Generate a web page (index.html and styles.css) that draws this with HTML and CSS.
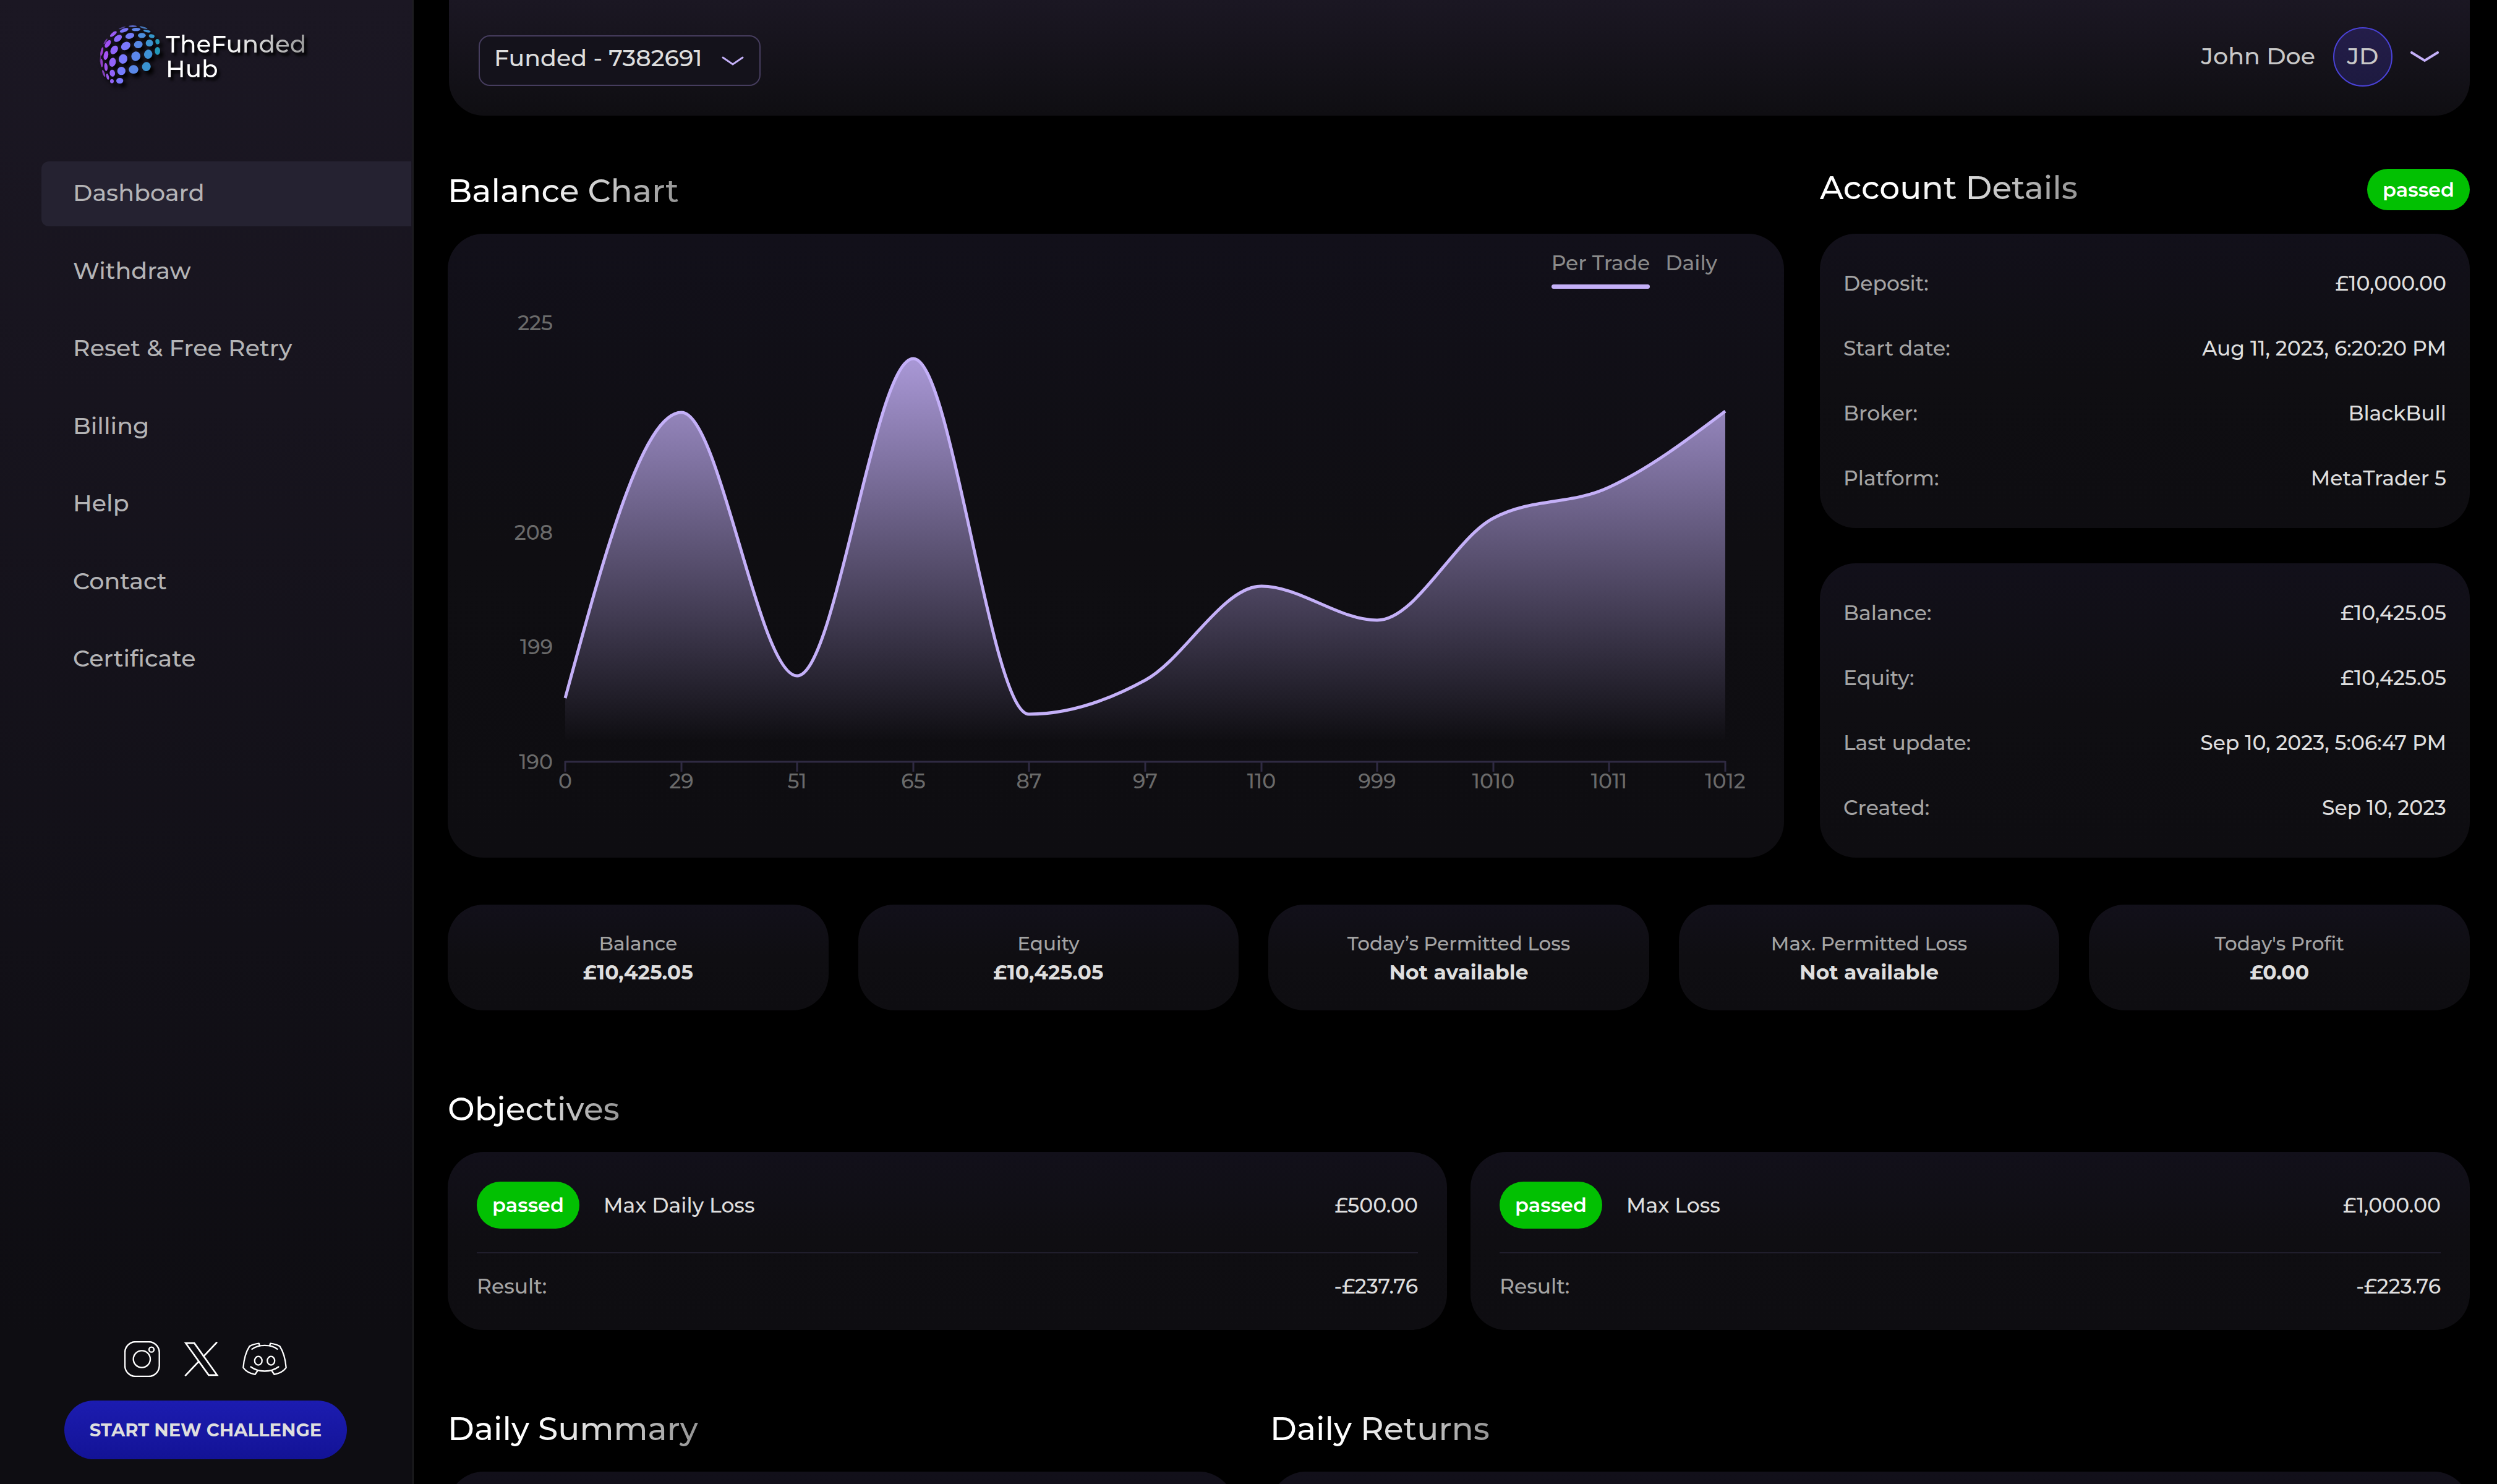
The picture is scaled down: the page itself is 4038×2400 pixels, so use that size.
FILE: index.html
```
<!DOCTYPE html>
<html lang="en">
<head>
<meta charset="utf-8">
<meta name="viewport" content="width=device-width, initial-scale=1">
<title>TheFunded Hub - Dashboard</title>
<link rel="stylesheet" href="styles.css">
</head>
<body>
<div class="app">
  <aside class="sidebar">
    <a class="logo" href="#">
      <svg class="logo-mark" viewBox="30 36 312 312" aria-hidden="true">
        <g fill="#7a44b8">
          <ellipse cx="143" cy="60" rx="17" ry="3" transform="rotate(-20 143 60)" fill="#4f4496"/>
          <ellipse cx="62" cy="126" rx="16" ry="4" transform="rotate(-58 62 126)" fill="#6a389c"/>
          <ellipse cx="37" cy="207" rx="2" ry="18" transform="rotate(6 37 207)" fill="#5c2c80"/>
        </g>
        <ellipse cx="194" cy="52" rx="20" ry="4" fill="#5f70d8"/>
        <ellipse cx="246" cy="59" rx="20" ry="4" transform="rotate(15 246 59)" fill="#4678bc"/>
        <ellipse cx="152" cy="72" rx="22" ry="9" transform="rotate(-20 152 72)" fill="#7b74fb"/>
        <ellipse cx="210" cy="68" rx="21" ry="8" transform="rotate(-2 210 68)" fill="#5f86ea"/>
        <ellipse cx="263" cy="76" rx="18" ry="6" transform="rotate(12 263 76)" fill="#4090d4"/>
        <ellipse cx="100" cy="90" rx="20" ry="8" transform="rotate(-38 100 90)" fill="#9a5cf5"/>
        <ellipse cx="122" cy="111" rx="22" ry="14" transform="rotate(-38 122 111)" fill="#8a68fa"/>
        <ellipse cx="180" cy="99" rx="22" ry="14" transform="rotate(-15 180 99)" fill="#737cf8"/>
        <ellipse cx="238" cy="97" rx="19" ry="12" fill="#4c8ede"/>
        <ellipse cx="286" cy="100" rx="14" ry="9" transform="rotate(10 286 100)" fill="#3595c8"/>
        <ellipse cx="73" cy="138" rx="21" ry="11" transform="rotate(-55 73 138)" fill="#a050f5"/>
        <ellipse cx="104" cy="167" rx="23" ry="16" transform="rotate(-55 104 167)" fill="#8f64fa"/>
        <ellipse cx="160" cy="148" rx="24" ry="19" transform="rotate(-35 160 148)" fill="#7a78fb"/>
        <ellipse cx="221" cy="141" rx="21" ry="18" transform="rotate(-10 221 141)" fill="#5688e6"/>
        <ellipse cx="275" cy="134" rx="18" ry="17" fill="#3d94d0"/>
        <ellipse cx="314" cy="127" rx="10" ry="13" transform="rotate(-10 314 127)" fill="#2498b8"/>
        <ellipse cx="44" cy="175" rx="6" ry="22" transform="rotate(12 44 175)" fill="#9a3fd0"/>
        <ellipse cx="64" cy="194" rx="11" ry="22" transform="rotate(12 64 194)" fill="#a654f5"/>
        <ellipse cx="96" cy="227" rx="16" ry="22" transform="rotate(12 96 227)" fill="#9263f8"/>
        <ellipse cx="147" cy="211" rx="21" ry="23" transform="rotate(10 147 211)" fill="#7a7afc"/>
        <ellipse cx="209" cy="198" rx="22" ry="23" transform="rotate(20 209 198)" fill="#5c88ee"/>
        <ellipse cx="269" cy="188" rx="20" ry="22" transform="rotate(15 269 188)" fill="#3e92d6"/>
        <ellipse cx="314" cy="172" rx="13" ry="19" fill="#2298b8"/>
        <ellipse cx="43" cy="230" rx="6" ry="21" transform="rotate(-5 43 230)" fill="#9240c8"/>
        <ellipse cx="64" cy="250" rx="8" ry="20" transform="rotate(-5 64 250)" fill="#a052ee"/>
        <ellipse cx="95" cy="280" rx="13" ry="17" transform="rotate(-10 95 280)" fill="#9263f8"/>
        <ellipse cx="139" cy="269" rx="20" ry="20" fill="#757cfc"/>
        <ellipse cx="198" cy="262" rx="23" ry="21" fill="#5a88e8"/>
        <ellipse cx="260" cy="248" rx="21" ry="22" transform="rotate(15 260 248)" fill="#3a93d2"/>
        <ellipse cx="53" cy="281" rx="5" ry="18" transform="rotate(-20 53 281)" fill="#8440bc"/>
        <ellipse cx="72" cy="297" rx="6" ry="15" transform="rotate(-15 72 297)" fill="#9a58ec"/>
        <ellipse cx="93" cy="319" rx="9" ry="10" fill="#9264f4"/>
        <ellipse cx="131" cy="317" rx="17" ry="14" fill="#7a78fb"/>
      </svg>
      <span class="logo-shadow"><span class="logo-text">TheFunded<br>Hub</span></span>
    </a>

    <nav class="nav" aria-label="Main">
      <a class="nav-link nav-link-active" href="#" aria-current="page">Dashboard</a>
      <a class="nav-link" href="#">Withdraw</a>
      <a class="nav-link" href="#">Reset &amp; Free Retry</a>
      <a class="nav-link" href="#">Billing</a>
      <a class="nav-link" href="#">Help</a>
      <a class="nav-link" href="#">Contact</a>
      <a class="nav-link" href="#">Certificate</a>
    </nav>

    <div class="sidebar-foot">
      <div class="social">
        <a href="#" aria-label="Instagram">
          <svg width="58" height="58" viewBox="63 57 174 174" fill="none" stroke="#fff" stroke-width="7">
            <rect x="66" y="60" width="167" height="168" rx="52"/>
            <circle cx="148" cy="144" r="41"/>
            <circle cx="195" cy="98" r="12"/>
          </svg>
        </a>
        <a href="#" aria-label="X">
          <svg width="57" height="56" viewBox="348 62 172 168" fill="none" stroke="#fff" stroke-width="8">
            <path d="M358 68H400L511 224H470Z"/>
            <path d="M511 63L443 135M424 155L355 228"/>
          </svg>
        </a>
        <a href="#" aria-label="Discord">
          <svg width="72" height="54" viewBox="633 65 218 162" fill="none" stroke="#fff" stroke-width="7" stroke-linecap="round" stroke-linejoin="round">
            <path d="M717 79L714 69C695 71 680 76 668 83C652 108 640 150 637 188C650 206 672 217 695 221L706 205"/>
            <path d="M767 79L770 69C789 71 804 76 816 83C832 108 844 150 847 188C834 206 812 217 789 221L778 205"/>
            <path d="M680 97C698 84 720 79 742 79S788 84 804 97M674 184C712 212 772 212 810 184"/>
            <ellipse cx="711" cy="154" rx="18" ry="21"/>
            <ellipse cx="773" cy="154" rx="18" ry="21"/>
          </svg>
        </a>
      </div>
      <button class="cta" type="button">START NEW CHALLENGE</button>
    </div>
  </aside>

  <main class="main">
    <header class="topbar">
      <div class="account-select">
        <select class="select" aria-label="Account">
          <option>Funded - 7382691</option>
        </select>
        <svg class="select-arrow" width="36" height="16" viewBox="0 0 36 16" fill="none" stroke="#c4b0f8" stroke-width="3" stroke-linecap="round" aria-hidden="true"><path d="M2 2L18 13L34 2"/></svg>
      </div>
      <button class="user" type="button" aria-haspopup="menu">
        <span class="user-name">John Doe</span>
        <span class="avatar">JD</span>
        <svg width="46" height="18" viewBox="0 0 46 18" fill="none" stroke="#c4b0f8" stroke-width="4" stroke-linecap="round" aria-hidden="true"><path d="M2 2L23 15L44 2"/></svg>
      </button>
    </header>

    <div class="overview">
      <section class="column">
        <h2 class="title">Balance Chart</h2>
        <div class="card chart-card">
          <div class="tabs" role="tablist">
            <button class="tab tab-active" type="button" role="tab" aria-selected="true">Per Trade</button>
            <button class="tab" type="button" role="tab" aria-selected="false">Daily</button>
          </div>
          <svg class="chart" viewBox="0 0 2161 920" role="img" aria-label="Balance per trade">
            <defs>
              <linearGradient id="area" x1="0" y1="0" x2="0" y2="1">
                <stop offset="0" stop-color="#c4b0f8" stop-opacity="0.85"/>
                <stop offset="0.95" stop-color="#c4b0f8" stop-opacity="0"/>
              </linearGradient>
            </defs>
            <path fill="url(#area)" d="M190 662C253 431 315 200 378 200C440 200 503 626 565 626C628 626 690 113 753 113C815 113 878 688 940 688C1003 688 1066 667 1128 633C1191 599 1253 481 1316 481C1378 481 1441 536 1503 536C1566 536 1628 404 1691 371C1753 338 1816 350 1878 321C1941 292 2004 245 2066 198V765H190Z"/>
            <path fill="none" stroke="#c4b0f8" stroke-width="5" d="M190 662C253 431 315 200 378 200C440 200 503 626 565 626C628 626 690 113 753 113C815 113 878 688 940 688C1003 688 1066 667 1128 633C1191 599 1253 481 1316 481C1378 481 1441 536 1503 536C1566 536 1628 404 1691 371C1753 338 1816 350 1878 321C1941 292 2004 245 2066 198"/>
            <path class="axis" d="M190 765H2066M190 764V781M378 764V781M565 764V781M753 764V781M940 764V781M1128 764V781M1316 764V781M1503 764V781M1691 764V781M1878 764V781M2066 764V781"/>
            <g class="tick tick-y">
              <text x="170" y="67">225</text>
              <text x="170" y="406">208</text>
              <text x="170" y="591">199</text>
              <text x="170" y="777">190</text>
            </g>
            <g class="tick tick-x">
              <text x="190" y="808">0</text>
              <text x="378" y="808">29</text>
              <text x="565" y="808">51</text>
              <text x="753" y="808">65</text>
              <text x="940" y="808">87</text>
              <text x="1128" y="808">97</text>
              <text x="1316" y="808">110</text>
              <text x="1503" y="808">999</text>
              <text x="1691" y="808">1010</text>
              <text x="1878" y="808">1011</text>
              <text x="2066" y="808">1012</text>
            </g>
          </svg>
        </div>
      </section>

      <section class="column">
        <div class="title-row">
          <h2 class="title">Account Details</h2>
          <span class="badge">passed</span>
        </div>
        <div class="details">
          <dl class="card detail-list">
            <div class="detail"><dt>Deposit:</dt><dd>£10,000.00</dd></div>
            <div class="detail"><dt>Start date:</dt><dd>Aug 11, 2023, 6:20:20 PM</dd></div>
            <div class="detail"><dt>Broker:</dt><dd>BlackBull</dd></div>
            <div class="detail"><dt>Platform:</dt><dd>MetaTrader 5</dd></div>
          </dl>
          <dl class="card detail-list">
            <div class="detail"><dt>Balance:</dt><dd>£10,425.05</dd></div>
            <div class="detail"><dt>Equity:</dt><dd>£10,425.05</dd></div>
            <div class="detail"><dt>Last update:</dt><dd>Sep 10, 2023, 5:06:47 PM</dd></div>
            <div class="detail"><dt>Created:</dt><dd>Sep 10, 2023</dd></div>
          </dl>
        </div>
      </section>
    </div>

    <dl class="stats">
      <div class="card stat"><dt>Balance</dt><dd>£10,425.05</dd></div>
      <div class="card stat"><dt>Equity</dt><dd>£10,425.05</dd></div>
      <div class="card stat"><dt>Today’s Permitted Loss</dt><dd>Not available</dd></div>
      <div class="card stat"><dt>Max. Permitted Loss</dt><dd>Not available</dd></div>
      <div class="card stat"><dt>Today's Profit</dt><dd>£0.00</dd></div>
    </dl>

    <section class="section">
      <h2 class="title">Objectives</h2>
      <div class="objectives">
        <article class="card objective">
          <div class="objective-head">
            <span class="badge badge-tall">passed</span>
            <span>Max Daily Loss</span>
            <span class="amount">£500.00</span>
          </div>
          <div class="objective-result"><span class="muted">Result:</span><span>-£237.76</span></div>
        </article>
        <article class="card objective">
          <div class="objective-head">
            <span class="badge badge-tall">passed</span>
            <span>Max Loss</span>
            <span class="amount">£1,000.00</span>
          </div>
          <div class="objective-result"><span class="muted">Result:</span><span>-£223.76</span></div>
        </article>
      </div>
    </section>

    <div class="section daily">
      <section>
        <h2 class="title">Daily Summary</h2>
        <div class="card daily-card"></div>
      </section>
      <section>
        <h2 class="title">Daily Returns</h2>
        <div class="card daily-card"></div>
      </section>
    </div>
  </main>
</div>
</body>
</html>
```
FILE: styles.css
```
* {
  box-sizing: border-box;
}

body {
  margin: 0;
  background: #000;
  color: #dedede;
  font-family: Montserrat, Inter, sans-serif;
  font-size: 33px;
  font-weight: 500;
  overflow: hidden;
}

h2,
dl,
dd {
  margin: 0;
}

a {
  color: inherit;
  text-decoration: none;
}

button,
select {
  font: inherit;
  color: inherit;
  background: none;
  border: 0;
  padding: 0;
  cursor: pointer;
}

svg {
  display: block;
}

.app {
  display: flex;
  height: 100vh;
}

/* Sidebar */

.sidebar {
  flex: none;
  width: 669px;
  padding: 37px 2px 40px 0;
  display: flex;
  flex-direction: column;
  background: linear-gradient(#1b1723, #0e0d12 90%);
  border-right: 2px solid #1e1e20;
}

.logo {
  display: flex;
  align-items: center;
  gap: 4px;
  padding-left: 160px;
}

.logo-mark {
  width: 104px;
  height: 104px;
  filter: drop-shadow(5px 6px 3px #000);
}

.logo-shadow {
  padding-top: 3px;
  filter: drop-shadow(4px 5px 2px #000);
}

.logo-text {
  display: block;
  font-size: 39px;
  line-height: 40px;
  background: linear-gradient(90deg, #fff 40%, #999);
  background-clip: text;
  color: transparent;
}

.nav {
  display: flex;
  flex-direction: column;
  justify-content: space-between;
  min-height: 858px;
  margin-top: 120px;
  padding-left: 67px;
}

.nav-link {
  padding: 30px 51px 33px;
  border-radius: 12px 0 0 12px;
  font-size: 38px;
  line-height: 42px;
  color: #b4b4b6;
}

.nav-link-active {
  background: #252231;
}

.sidebar-foot {
  margin-top: auto;
  display: flex;
  flex-direction: column;
  align-items: center;
  gap: 38px;
}

.social {
  display: flex;
  align-items: center;
  gap: 38px;
}

.cta {
  padding: 0 41px;
  border-radius: 48px;
  background: linear-gradient(#1c1cb0, #131396);
  font-size: 29px;
  font-weight: 700;
  line-height: 95px;
  color: #dedede;
}

/* Main column */

.main {
  flex: 1;
  min-width: 0;
  padding: 0 44px 44px 55px;
  overflow: hidden;
}

.topbar {
  display: flex;
  justify-content: space-between;
  align-items: flex-end;
  margin-left: 2px;
  padding: 44px 50px 47px 48px;
  border-radius: 0 0 56px 56px;
  background: linear-gradient(#1b1723, #0f0e12);
}

.account-select {
  position: relative;
  padding-bottom: 1px;
}

.select {
  display: block;
  appearance: none;
  width: 456px;
  height: 82px;
  padding: 0 80px 10px 23px;
  border: 2px solid #463d5e;
  border-radius: 18px;
  background: #14121b;
  font-size: 38px;
}

.select-arrow {
  position: absolute;
  right: 27px;
  top: 34px;
  pointer-events: none;
}

.user {
  display: flex;
  align-items: center;
  gap: 29px;
  font-size: 38px;
  color: #c8c8c8;
}

.user-name {
  padding-bottom: 3px;
}

.avatar {
  width: 96px;
  padding-bottom: 3px;
  border: 2px solid #4a42d8;
  border-radius: 50%;
  background: linear-gradient(#241d49, #1d1a40);
  line-height: 89px;
  text-align: center;
}

.card {
  border-radius: 58px;
  background: linear-gradient(#12101a, #0f0e12 50%, #0e0d11);
}

.title {
  width: fit-content;
  margin-bottom: 33px;
  font-size: 52px;
  font-weight: 500;
  line-height: 72px;
  background: linear-gradient(90deg, #fff 35%, #959595);
  background-clip: text;
  color: transparent;
}

.badge {
  padding: 0 25px;
  border-radius: 38px;
  background: #02c002;
  font-size: 32px;
  font-weight: 600;
  line-height: 67px;
  color: #fff;
}

.badge-tall {
  line-height: 76px;
}

.overview {
  display: grid;
  grid-template-columns: 2161fr 1051fr;
  gap: 58px;
  margin-top: 86px;
}

.column {
  display: flex;
  flex-direction: column;
  min-width: 0;
}

.title-row {
  display: flex;
  justify-content: space-between;
  align-items: flex-end;
  margin-bottom: 38px;
}

.title-row .title {
  margin: -5px 0 0;
  align-self: flex-start;
}

/* Chart */

.chart-card {
  padding-top: 27px;
}

.tabs {
  display: flex;
  justify-content: flex-end;
  gap: 25px;
  padding-right: 108px;
}

.tab {
  line-height: 40px;
  color: #8a8a8a;
}

.tab::after {
  content: "";
  display: block;
  height: 7px;
  margin-top: 15px;
  border-radius: 4px;
}

.tab-active::after {
  background: #c4b0f8;
}

.chart {
  width: 100%;
  height: auto;
}

.axis {
  fill: none;
  stroke: #2f2a42;
  stroke-width: 3;
}

.tick {
  font-size: 33px;
  fill: #6a6a6a;
}

.tick-y {
  text-anchor: end;
}

.tick-x {
  text-anchor: middle;
}

/* Account details */

.details {
  flex: 1;
  display: grid;
  gap: 57px;
}

.detail-list {
  padding: 28px 38px;
}

.detail {
  display: flex;
  justify-content: space-between;
  line-height: 105px;
}

.detail dt,
.stat dt,
.muted {
  color: #a4a4a4;
}

/* Stats */

.stats {
  display: grid;
  grid-template-columns: repeat(5, 1fr);
  gap: 48px;
  margin-top: 76px;
}

.stat {
  padding: 40px 20px 39px;
  text-align: center;
  line-height: 46px;
}

.stat dt {
  font-size: 31px;
}

.stat dd {
  font-weight: 700;
}

/* Objectives */

.section {
  margin-top: 124px;
}

.objectives {
  display: grid;
  grid-template-columns: 1fr 1fr;
  gap: 38px;
}

.objective {
  padding: 48px 47px 18px;
}

.objective-head {
  display: flex;
  align-items: center;
  gap: 39px;
  padding-bottom: 38px;
  border-bottom: 2px solid #201e2c;
}

.amount {
  margin-left: auto;
}

.objective-result {
  display: flex;
  justify-content: space-between;
  line-height: 106px;
}

/* Daily */

.daily {
  display: grid;
  grid-template-columns: 1273fr 1940fr;
  gap: 57px;
}

.daily-card {
  min-height: 480px;
}
```
